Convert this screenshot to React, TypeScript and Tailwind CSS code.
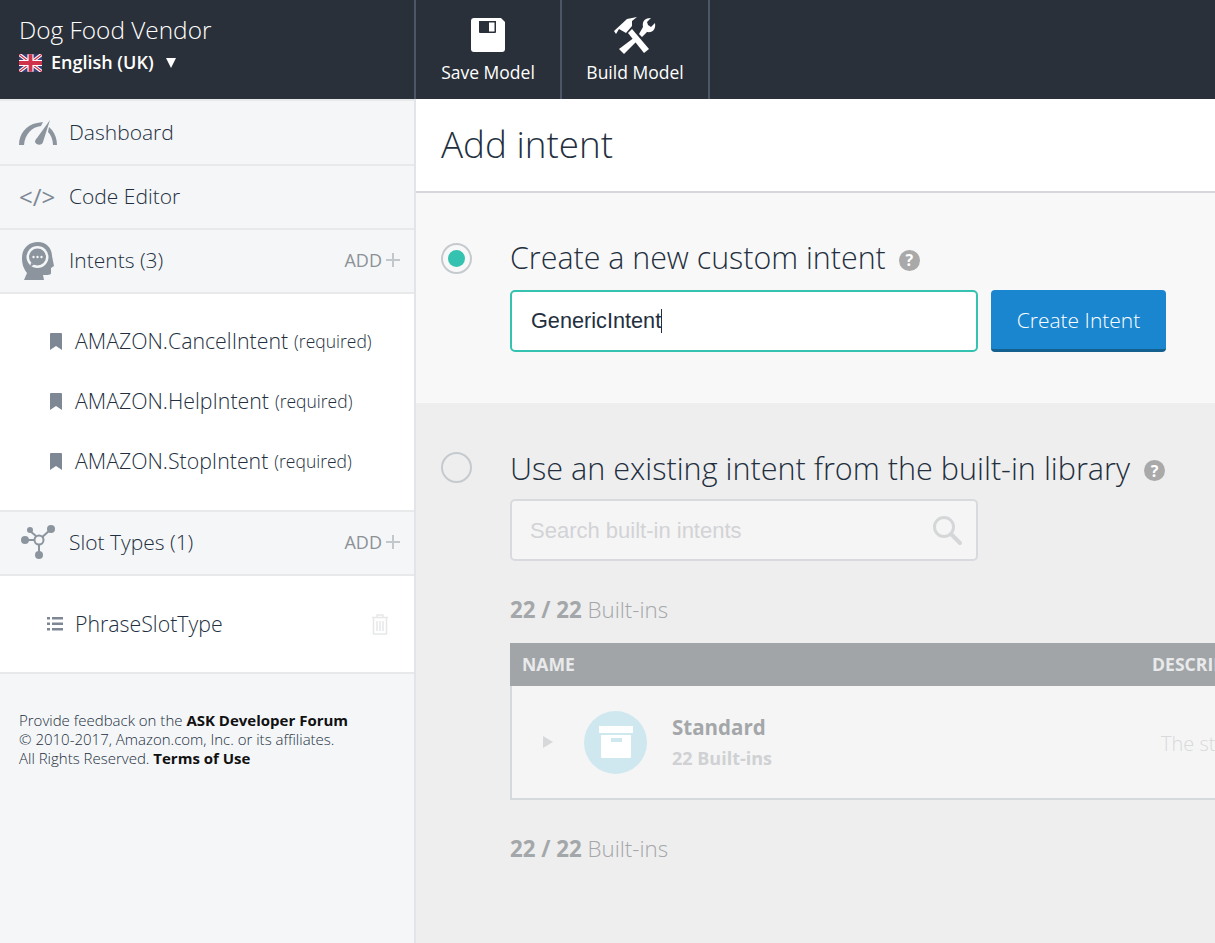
import React from "react";

const font = "font-['Open_Sans',sans-serif]";

const UkFlag = () => (
  <svg width="23" height="18" viewBox="0 0 60 46" className="block">
    <rect width="60" height="46" fill="#3b3f78" />
    <path d="M0 0L60 46M60 0L0 46" stroke="#fff" strokeWidth="9" />
    <path d="M0 0L60 46M60 0L0 46" stroke="#d0324b" strokeWidth="3" />
    <path d="M30 0V46M0 23H60" stroke="#fff" strokeWidth="16" />
    <path d="M30 0V46M0 23H60" stroke="#d0324b" strokeWidth="10" />
  </svg>
);

const SaveIcon = () => (
  <svg width="34" height="34" viewBox="0 0 34 34">
    <path
      fillRule="evenodd"
      fill="#fff"
      d="M3 0H30L34 4V31a3 3 0 0 1-3 3H3a3 3 0 0 1-3-3V3a3 3 0 0 1 3-3ZM8 3V14a1 1 0 0 0 1 1H24a1 1 0 0 0 1-1V3ZM18 4.5H23.5V13.5H18Z"
    />
  </svg>
);

const BuildIcon = () => (
  <svg width="42" height="37" viewBox="0 0 42 37" fill="#fff">
    <path d="M0 14L13 2L23 0L18 4V9L12 16L5 12L2 17Z" />
    <path d="M14 16L18 12L35 32L30 36Z" />
    <path d="M21 20L24 23L10 37L5 32Z" />
    <path d="M25 17L29 10C28 4 31 1 37 1L33 5L34 8L37 10L41 6C42 12 39 16 33 15L28 20Z" />
  </svg>
);

const GaugeIcon = () => (
  <svg width="39" height="26" viewBox="0 0 39 26" fill="#8c959e">
    <path d="M0 25C0 14 7 5 18 3L24 2L22 6C13 7 6 14 5 25Z" />
    <path d="M30 7L33 10C36 14 38 19 38 25H34C34 20 32 15 29 12Z" />
    <path d="M31 0L24 22C23 26 17 25 16 22C16 20 17 19 18 18Z" />
  </svg>
);

const HeadIcon = () => (
  <svg width="32" height="38" viewBox="0 0 32 38" fill="#8c959e">
    <path d="M2 38L5 31C2 27 0 23 0 16C0 6 7 0 16 0C24 0 30 6 30 14L32 24L29 26V31C29 33 26 33 21 33L22 38Z" />
    <circle cx="15.5" cy="15" r="11" fill="#f4f6f8" />
    <circle cx="15.5" cy="15" r="8.5" fill="#8c959e" />
    <path d="M9 21L8 25L13 22Z" fill="#8c959e" />
    <circle cx="11.5" cy="15" r="1.2" fill="#f4f6f8" />
    <circle cx="15.5" cy="15" r="1.2" fill="#f4f6f8" />
    <circle cx="19.5" cy="15" r="1.2" fill="#f4f6f8" />
  </svg>
);

const NodesIcon = () => (
  <svg width="36" height="36" viewBox="0 0 36 36" fill="#8c959e">
    <path d="M19 15L30 5M8 15H15M10 6L16 11M19 20V30" stroke="#8c959e" strokeWidth="2" />
    <circle cx="5" cy="15" r="4" />
    <circle cx="10" cy="5" r="3" />
    <circle cx="31" cy="4" r="4" />
    <circle cx="19" cy="30" r="4" />
    <circle cx="19" cy="15" r="4.5" fill="#f4f6f8" stroke="#8c959e" strokeWidth="2" />
  </svg>
);

const BookmarkIcon = () => (
  <svg width="12" height="17" viewBox="0 0 12 17" fill="#7d8894" className="shrink-0">
    <path d="M0 1a1 1 0 0 1 1-1H11a1 1 0 0 1 1 1V17L6 13L0 17Z" />
  </svg>
);

const ListIcon = () => (
  <svg width="17" height="14" viewBox="0 0 17 14" fill="#7d8894" className="shrink-0">
    <path d="M0 0H3V2.5H0ZM5 0H16V2.5H5ZM0 5.5H3V8H0ZM5 5.5H16V8H5ZM0 11H3V13.5H0ZM5 11H16V13.5H5Z" />
  </svg>
);

const TrashIcon = () => (
  <svg width="16" height="21" viewBox="0 0 16 21" fill="none" stroke="#e6e8ea" strokeWidth="1.5">
    <path d="M0 3.5H16M5 3V1H11V3M1.5 4V20H14.5V4M5 7V17M8 7V17M11 7V17" />
  </svg>
);

const HelpDot = () => (
  <span className="flex h-[21px] w-[21px] shrink-0 items-center justify-center rounded-full bg-[#a9a9a9] text-[16px] font-bold leading-none text-white">
    ?
  </span>
);

const SearchIcon = () => (
  <svg width="30" height="30" viewBox="0 0 30 30" fill="none" stroke="#d4d6d8">
    <circle cx="12" cy="12" r="9.5" strokeWidth="3" />
    <path d="M19 19L28 28" strokeWidth="4" strokeLinecap="round" />
  </svg>
);

const BoxIcon = () => (
  <svg width="34" height="32" viewBox="0 0 34 32" fill="#fff">
    <path d="M0 0H34V7H0Z" />
    <path fillRule="evenodd" d="M2 9H32V31a1 1 0 0 1-1 1H3a1 1 0 0 1-1-1ZM12 12V16H23V12Z" />
  </svg>
);

const AddLink = () => (
  <div className="-mt-[2px] flex items-center gap-[4px] text-[18px] font-normal text-[#8d9196]">
    <span>ADD</span>
    <svg width="14" height="14" viewBox="0 0 14 14" stroke="#c2c7cc" strokeWidth="2">
      <path d="M7 0V14M0 7H14" />
    </svg>
  </div>
);

const SideRow: React.FC<{
  icon: React.ReactNode;
  label: string;
  action?: boolean;
  height: string;
}> = ({ icon, label, action, height }) => (
  <div className={`flex items-center border-b-2 border-[#e7e9eb] pr-[14px] ${height}`}>
    <div className="flex w-[69px] shrink-0 justify-start pl-[19px]">{icon}</div>
    <span className="flex-1 text-[21px] font-light text-[#232f3e]">{label}</span>
    {action && <AddLink />}
  </div>
);

const IntentItem: React.FC<{ name: string }> = ({ name }) => (
  <div className="flex h-[60px] items-center pl-[50px]">
    <BookmarkIcon />
    <span className="ml-[13px] text-[21.3px] font-light text-[#232f3e]">{name}</span>
    <span className="ml-[6px] text-[17.5px] font-light text-[#232f3e]">(required)</span>
  </div>
);

const TopButton: React.FC<{ icon: React.ReactNode; label: string; width: string }> = ({
  icon,
  label,
  width,
}) => (
  <div className={`flex flex-col items-center border-r-2 border-[#4b5766] pt-[15px] ${width}`}>
    <div className="flex h-[40px] items-center">{icon}</div>
    <span className="mt-[4px] text-[17.5px] font-normal text-white">{label}</span>
  </div>
);

const Sidebar = () => (
  <aside className="flex w-[416px] shrink-0 flex-col border-r-2 border-[#e2e4e7] bg-[#f4f6f8]">
    <div className="h-[2px] bg-[#e7e9eb]" />
    <SideRow icon={<GaugeIcon />} label="Dashboard" height="h-[65px]" />
    <SideRow
      icon={<span className="text-[24px] font-normal leading-none text-[#7d8894]">&lt;/&gt;</span>}
      label="Code Editor"
      height="h-[64px]"
    />
    <SideRow icon={<span className="ml-[3px] block"><HeadIcon /></span>} label="Intents (3)" action height="h-[64px]" />
    <div className="flex h-[218px] flex-col justify-center border-b-2 border-[#e7e9eb] bg-white pb-[2px]">
      <IntentItem name="AMAZON.CancelIntent" />
      <IntentItem name="AMAZON.HelpIntent" />
      <IntentItem name="AMAZON.StopIntent" />
    </div>
    <SideRow icon={<span className="ml-[1px] block"><NodesIcon /></span>} label="Slot Types (1)" action height="h-[64px]" />
    <div className="flex h-[98px] items-center border-b-2 border-[#e7e9eb] bg-white pl-[47px] pr-[26px]">
      <ListIcon />
      <span className="ml-[11px] flex-1 text-[21.3px] font-light text-[#232f3e]">PhraseSlotType</span>
      <TrashIcon />
    </div>
    <div className="px-[19px] pt-[37px] text-[15px] font-light leading-[19px] text-[#232f3e]">
      <div>
        Provide feedback on the <b className="font-bold text-[#111]">ASK Developer Forum</b>
      </div>
      <div>© 2010-2017, Amazon.com, Inc. or its affiliates.</div>
      <div>
        All Rights Reserved. <b className="font-bold text-[#111]">Terms of Use</b>
      </div>
    </div>
  </aside>
);

const Main = () => (
  <main className="flex min-w-0 flex-1 flex-col overflow-hidden">
    <div className="flex h-[94px] shrink-0 items-center border-b-2 border-[#d5d7da] bg-white pl-[25px]">
      <h1 className="text-[36.8px] font-light text-[#232f3e]">Add intent</h1>
    </div>
    <section className="flex h-[210px] shrink-0 bg-[#f8f8f8] pl-[25px] pt-[50px]">
      <div className="flex h-[31px] w-[31px] shrink-0 items-center justify-center rounded-full border-2 border-[#c5cacf]">
        <div className="h-[17px] w-[17px] rounded-full bg-[#36c2b0]" />
      </div>
      <div className="ml-[38px]">
        <div className="flex h-[30px] items-center">
          <span className="text-[30.4px] font-light text-[#232f3e]">Create a new custom intent</span>
          <span className="ml-[13px] mt-[4px]">
            <HelpDot />
          </span>
        </div>
        <div className="mt-[17px] flex gap-[13px]">
          <div className="flex h-[62px] w-[468px] items-center rounded-[5px] border-2 border-[#36c2b0] bg-white pl-[19px]">
            <span className="font-['Liberation_Sans',sans-serif] text-[21.7px] text-[#232f3e]">GenericIntent</span>
            <span className="h-[24px] w-px bg-[#232f3e]" />
          </div>
          <button className="h-[62px] w-[175px] rounded-[4px] border-b-[3px] border-[#14618f] bg-[#1a86d0] pt-[2px] text-[21px] font-light text-white">
            Create Intent
          </button>
        </div>
      </div>
    </section>
    <section className="flex flex-1 bg-[#eeeeee] pl-[25px] pt-[49px]">
      <div className="h-[31px] w-[31px] shrink-0 rounded-full border-2 border-[#c5cacf]" />
      <div className="ml-[38px] min-w-0 flex-1">
        <div className="flex h-[33px] items-center whitespace-nowrap">
          <span className="text-[30.6px] font-light text-[#232f3e]">
            Use an existing intent from the built-in library
          </span>
          <span className="ml-[14px] mt-[4px]">
            <HelpDot />
          </span>
        </div>
        <div className="mt-[14px] flex h-[62px] w-[468px] items-center justify-between rounded-[5px] border-2 border-[#d8dadd] bg-[#f5f5f5] pl-[18px] pr-[14px]">
          <span className="font-['Liberation_Sans',sans-serif] text-[22px] text-[#d2d3d5]">Search built-in intents</span>
          <SearchIcon />
        </div>
        <div className="mt-[34px] text-[22.3px] font-light leading-[30px] text-[#a4a7aa]">
          <b className="font-bold">22 / 22</b> Built-ins
        </div>
        <div className="mt-[18px] w-[800px]">
          <div className="flex h-[43px] items-center bg-[#a1a5a8] pl-[12px] text-[17.6px] font-bold text-[#e9eaeb]">
            <span className="w-[630px] shrink-0">NAME</span>
            <span className="whitespace-nowrap">DESCRIPTION</span>
          </div>
          <div className="flex h-[114px] items-center border-2 border-t-0 border-[#d5d9dc] bg-[#f5f5f5] pl-[31px]">
            <span className="h-0 w-0 shrink-0 border-y-[6px] border-l-[10px] border-y-transparent border-l-[#d6d8da]" />
            <div className="ml-[31px] flex h-[63px] w-[63px] shrink-0 items-center justify-center rounded-full bg-[#cfe8f0]">
              <BoxIcon />
            </div>
            <div className="ml-[25px] w-[489px] shrink-0">
              <div className="-mt-[3px] text-[20.5px] font-bold leading-[30px] text-[#a4a7aa]">Standard</div>
              <div className="mt-[4px] text-[18px] font-bold leading-[24px] text-[#cfd1d3]">22 Built-ins</div>
            </div>
            <span className="mt-[3px] whitespace-nowrap text-[20px] font-light text-[#d8d9db]">The standard built-in intents</span>
          </div>
        </div>
        <div className="mt-[34px] text-[22.3px] font-light leading-[30px] text-[#a4a7aa]">
          <b className="font-bold">22 / 22</b> Built-ins
        </div>
      </div>
    </section>
  </main>
);

export default function App() {
  return (
    <div className={`flex h-[943px] w-[1215px] flex-col overflow-hidden ${font}`}>
      <header className="flex h-[99px] shrink-0 bg-[#2a3039]">
        <div className="w-[416px] shrink-0 border-r-2 border-[#4b5766] pl-[19px] pt-[13px]">
          <div className="text-[24.4px] font-light leading-[33px] text-white">Dog Food Vendor</div>
          <div className="mt-[3px] flex items-center">
            <UkFlag />
            <span className="ml-[9px] text-[18px] font-semibold text-white">English (UK)</span>
            <span className="ml-[12px] h-0 w-0 border-x-[5.5px] border-t-[10px] border-x-transparent border-t-white" />
          </div>
        </div>
        <TopButton icon={<SaveIcon />} label="Save Model" width="w-[146px]" />
        <TopButton icon={<BuildIcon />} label="Build Model" width="w-[148px]" />
      </header>
      <div className="flex min-h-0 flex-1">
        <Sidebar />
        <Main />
      </div>
    </div>
  );
}
